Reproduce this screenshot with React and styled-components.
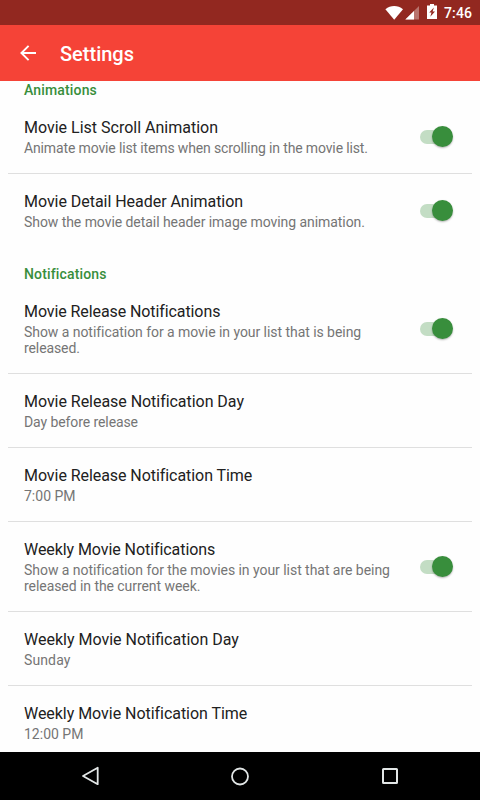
import React from 'react';
import styled, { createGlobalStyle } from 'styled-components';

const Global = createGlobalStyle`
  * { box-sizing: border-box; }
  body { margin: 0; background: #fff; font-family: Roboto, "Liberation Sans", sans-serif; }
`;

const Screen = styled.div`
  width: 480px;
  height: 800px;
  display: flex;
  flex-direction: column;
  overflow: hidden;
  background: #fefefe;
`;

const StatusBar = styled.div`
  flex: none;
  height: 25px;
  padding-right: 8px;
  display: flex;
  justify-content: flex-end;
  background: #922820;
`;

const Clock = styled.span`
  width: 28px;
  margin-left: 5px;
  font-size: 14px;
  font-weight: 500;
  letter-spacing: 0.15px;
  line-height: 26px;
  color: #fff;
`;

const AppBar = styled.header`
  flex: none;
  height: 56px;
  padding-left: 20px;
  display: flex;
  align-items: center;
  gap: 24px;
  background: #f54337;
`;

const Title = styled.h1`
  margin: 0;
  padding-top: 2px;
  font-size: 20px;
  font-weight: 500;
  line-height: 24px;
  color: #fff;
`;

const Content = styled.main`
  flex: 1;
  min-height: 0;
  overflow: hidden;
  padding: 1px 8px 0;
`;

const SectionTitle = styled.h2`
  margin: 0;
  padding: ${(p) => (p.$first ? 0 : 19)}px 16px 2px;
  font-size: 14px;
  font-weight: 500;
  letter-spacing: 0.15px;
  line-height: 16px;
  color: #388e3c;
`;

const Row = styled.div`
  display: flex;
  align-items: center;
  padding: 0 16px;
  border-bottom: ${(p) => (p.$last ? '0' : '1px solid #dfdfdf')};
`;

const RowText = styled.div`
  flex: 1;
  padding: 17px 0;
`;

const Name = styled.div`
  margin-bottom: 1px;
  font-size: 16px;
  letter-spacing: ${(p) => p.$tracking || 0}px;
  line-height: 22px;
  color: #212121;
`;

const Summary = styled.div`
  font-size: 14px;
  letter-spacing: ${(p) => p.$tracking || 0}px;
  line-height: 16px;
  color: #757575;
`;

const Track = styled.div`
  flex: none;
  width: 32px;
  height: 14px;
  margin-left: 20px;
  margin-right: 4px;
  display: flex;
  align-items: center;
  justify-content: flex-end;
  border-radius: 7px;
  background: #c3ddc4;
`;

const Thumb = styled.div`
  flex: none;
  width: 21px;
  height: 21px;
  margin-right: -1px;
  margin-bottom: 1px;
  border-radius: 50%;
  background: #388e3c;
  box-shadow: 0 1px 2px rgba(0, 0, 0, 0.3);
`;

const NavBar = styled.nav`
  flex: none;
  height: 48px;
  display: flex;
  justify-content: center;
  gap: 102px;
  background: #000;
`;

const sections = [
  {
    title: 'Animations',
    rows: [
      { name: 'Movie List Scroll Animation', lines: [['Animate movie list items when scrolling in the movie list.', -0.14]], toggle: true },
      { name: 'Movie Detail Header Animation', tracking: -0.04, lines: [['Show the movie detail header image moving animation.', -0.06]], toggle: true },
    ],
  },
  {
    title: 'Notifications',
    rows: [
      { name: 'Movie Release Notifications', tracking: -0.09, lines: [['Show a notification for a movie in your list that is being', -0.05], ['released.', -0.1]], toggle: true },
      { name: 'Movie Release Notification Day', tracking: -0.04, lines: [['Day before release', -0.09]] },
      { name: 'Movie Release Notification Time', tracking: -0.06, lines: [['7:00 PM', 0]] },
      { name: 'Weekly Movie Notifications', tracking: -0.07, lines: [['Show a notification for the movies in your list that are being', -0.04], ['released in the current week.', -0.06]], toggle: true },
      { name: 'Weekly Movie Notification Day', lines: [['Sunday', 0.12]] },
      { name: 'Weekly Movie Notification Time', tracking: -0.04, lines: [['12:00 PM', 0]] },
    ],
  },
];

function Setting({ name, tracking, lines, toggle, last }) {
  return (
    <Row $last={last}>
      <RowText>
        <Name $tracking={tracking}>{name}</Name>
        {lines.map(([text, spacing]) => <Summary key={text} $tracking={spacing}>{text}</Summary>)}
      </RowText>
      {toggle && <Track><Thumb /></Track>}
    </Row>
  );
}

export default function App() {
  return (
    <Screen>
      <Global />
      <StatusBar>
        <svg width="54" height="25" viewBox="0 0 54 25">
          <path d="M.4 9.200C5.700 5 12.700 5 18 9.200L9.200 19.700Z" fill="#fff" />
          <path d="M34 6V19.500H20.300Z" fill="#fff" fillOpacity=".35" />
          <path d="M29 11V19.500H20.300Z" fill="#fff" />
          <path d="M45 4h4v1.500h3V19h-10V5.500h3Z" fill="#fff" />
          <path d="M48.900 7.500L44.200 12.600H46.500L45.300 16.800L50 11.500H47.600Z" fill="#922820" />
        </svg>
        <Clock>7:46</Clock>
      </StatusBar>
      <AppBar>
        <svg width="16" height="16" viewBox="0 0 16 16" fill="none" stroke="#fff" strokeWidth="1.900">
          <path d="M16 8H2M8.600.8L1.400 8l7.200 7.200" />
        </svg>
        <Title>Settings</Title>
      </AppBar>
      <Content>
        {sections.map((section, s) => (
          <section key={section.title}>
            <SectionTitle $first={s === 0}>{section.title}</SectionTitle>
            {section.rows.map((row, i) => (
              <Setting key={row.name} {...row} last={i === section.rows.length - 1} />
            ))}
          </section>
        ))}
      </Content>
      <NavBar>
        <svg width="48" height="48" viewBox="0 0 48 48" fill="none" stroke="#e2e6e6" strokeWidth="1.800" strokeLinejoin="round">
          <path d="M31.700 15.800V32.200L17 24Z" />
        </svg>
        <svg width="48" height="48" viewBox="0 0 48 48" fill="none" stroke="#e2e6e6" strokeWidth="1.800">
          <circle cx="24" cy="24.500" r="8" />
        </svg>
        <svg width="48" height="48" viewBox="0 0 48 48" fill="none" stroke="#e2e6e6" strokeWidth="2">
          <rect x="17" y="17" width="14" height="14" rx=".5" />
        </svg>
      </NavBar>
    </Screen>
  );
}
